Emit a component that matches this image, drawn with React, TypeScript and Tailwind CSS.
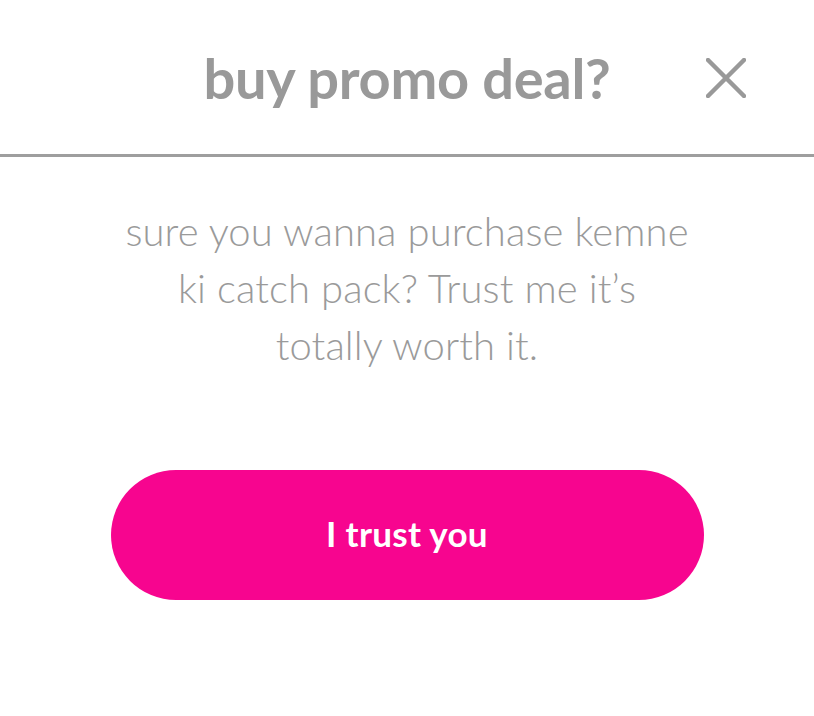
import React from "react";

export default function App() {
  return (
    <div className="w-[814px] h-[716px] bg-white" style={{ fontFamily: "Lato, 'Noto Sans', sans-serif" }}>
      <div className="grid grid-cols-[1fr_auto_1fr] items-center h-[157px] border-b-[3px] border-[#9e9e9e] pt-[2px]">
        <div />
        <h1 className="text-[56px] font-bold text-[#999999] leading-none tracking-[-0.3px]">buy promo deal?</h1>
        <div className="flex justify-end pr-[68px]">
          <svg width="40" height="40" viewBox="0 0 40 40" fill="none" stroke="#999999" strokeWidth="4.5" strokeLinecap="round">
            <path d="M2 2 L38 38 M38 2 L2 38" />
          </svg>
        </div>
      </div>
      <div className="flex flex-col items-center">
        <p className="mt-[46px] text-center text-[40px] leading-[57px] font-light text-[#9a9a9a] whitespace-nowrap tracking-[0.1px]">
          sure you wanna purchase kemne
          <br />
          ki catch pack? Trust me it’s
          <br />
          totally worth it.
        </p>
        <button className="mt-[96px] w-[593px] h-[130px] rounded-full bg-[#f7058f] text-white text-[35px] font-bold tracking-[0.3px] pb-[4px]">
          I trust you
        </button>
      </div>
    </div>
  );
}
